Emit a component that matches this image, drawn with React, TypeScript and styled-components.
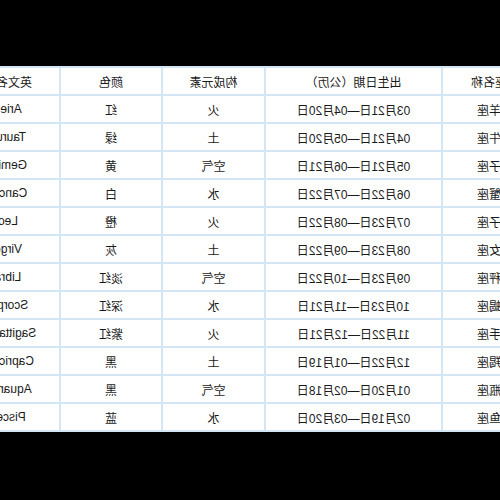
import React from "react";
import styled, { createGlobalStyle } from "styled-components";

const GlobalStyle = createGlobalStyle`
  html, body {
    margin: 0;
    padding: 0;
    background: #000;
  }
`;

const Page = styled.div`
  width: 500px;
  height: 500px;
  background: #000;
  display: flex;
  flex-direction: column;
  padding-top: 66px;
  box-sizing: border-box;
  overflow: hidden;
`;

// the screenshot is a mirrored copy of the table
const Mirror = styled.div`
  width: 500px;
  overflow: hidden;
  background: #fff;
  transform: scaleX(-1);
`;

const Table = styled.table`
  border-collapse: collapse;
  margin-left: -49px;
  table-layout: fixed;
  width: 592px;
  font-family: "Liberation Sans", "Noto Sans CJK SC", sans-serif;
  font-size: 12px;
  color: #1a1a1a;
`;

const Cell = styled.td`
  box-sizing: border-box;
  height: 28px;
  padding: 0;
  border: 2px solid #d3e6f4;
  text-align: center;
  vertical-align: middle;
  white-space: nowrap;
  overflow: hidden;
`;

const HeadCell = styled(Cell).attrs({ as: "th" })`
  font-weight: normal;
`;

const widths = [106, 177, 103, 102, 104];

type Sign = {
  name: string;
  date: string;
  element: string;
  color: string;
  en: string;
};

const signs: Sign[] = [
  { name: "白羊座", date: "03月21日—04月20日", element: "火", color: "红", en: "Aries" },
  { name: "金牛座", date: "04月21日—05月20日", element: "土", color: "绿", en: "Taurus" },
  { name: "双子座", date: "05月21日—06月21日", element: "空气", color: "黄", en: "Gemini" },
  { name: "巨蟹座", date: "06月22日—07月22日", element: "水", color: "白", en: "Cancer" },
  { name: "狮子座", date: "07月23日—08月22日", element: "火", color: "橙", en: "Leo" },
  { name: "处女座", date: "08月23日—09月22日", element: "土", color: "灰", en: "Virgo" },
  { name: "天秤座", date: "09月23日—10月22日", element: "空气", color: "淡红", en: "Libra" },
  { name: "天蝎座", date: "10月23日—11月21日", element: "水", color: "深红", en: "Scorpio" },
  { name: "射手座", date: "11月22日—12月21日", element: "火", color: "紫红", en: "Sagittarius" },
  { name: "摩羯座", date: "12月22日—01月19日", element: "土", color: "黑", en: "Capricorn" },
  { name: "水瓶座", date: "01月20日—02月18日", element: "空气", color: "黑", en: "Aquarius" },
  { name: "双鱼座", date: "02月19日—03月20日", element: "水", color: "蓝", en: "Pisces" },
];

function App() {
  return (
    <Page>
      <GlobalStyle />
      <Mirror>
        <Table>
          <colgroup>
            {widths.map((w, i) => (
              <col key={i} style={{ width: w }} />
            ))}
          </colgroup>
          <thead>
            <tr>
              <HeadCell>星座名称</HeadCell>
              <HeadCell>出生日期（公历）</HeadCell>
              <HeadCell>构成元素</HeadCell>
              <HeadCell>颜色</HeadCell>
              <HeadCell>英文名称</HeadCell>
            </tr>
          </thead>
          <tbody>
            {signs.map((s) => (
              <tr key={s.name}>
                <Cell>{s.name}</Cell>
                <Cell>{s.date}</Cell>
                <Cell>{s.element}</Cell>
                <Cell>{s.color}</Cell>
                <Cell>{s.en}</Cell>
              </tr>
            ))}
          </tbody>
        </Table>
      </Mirror>
    </Page>
  );
}

export default App;
